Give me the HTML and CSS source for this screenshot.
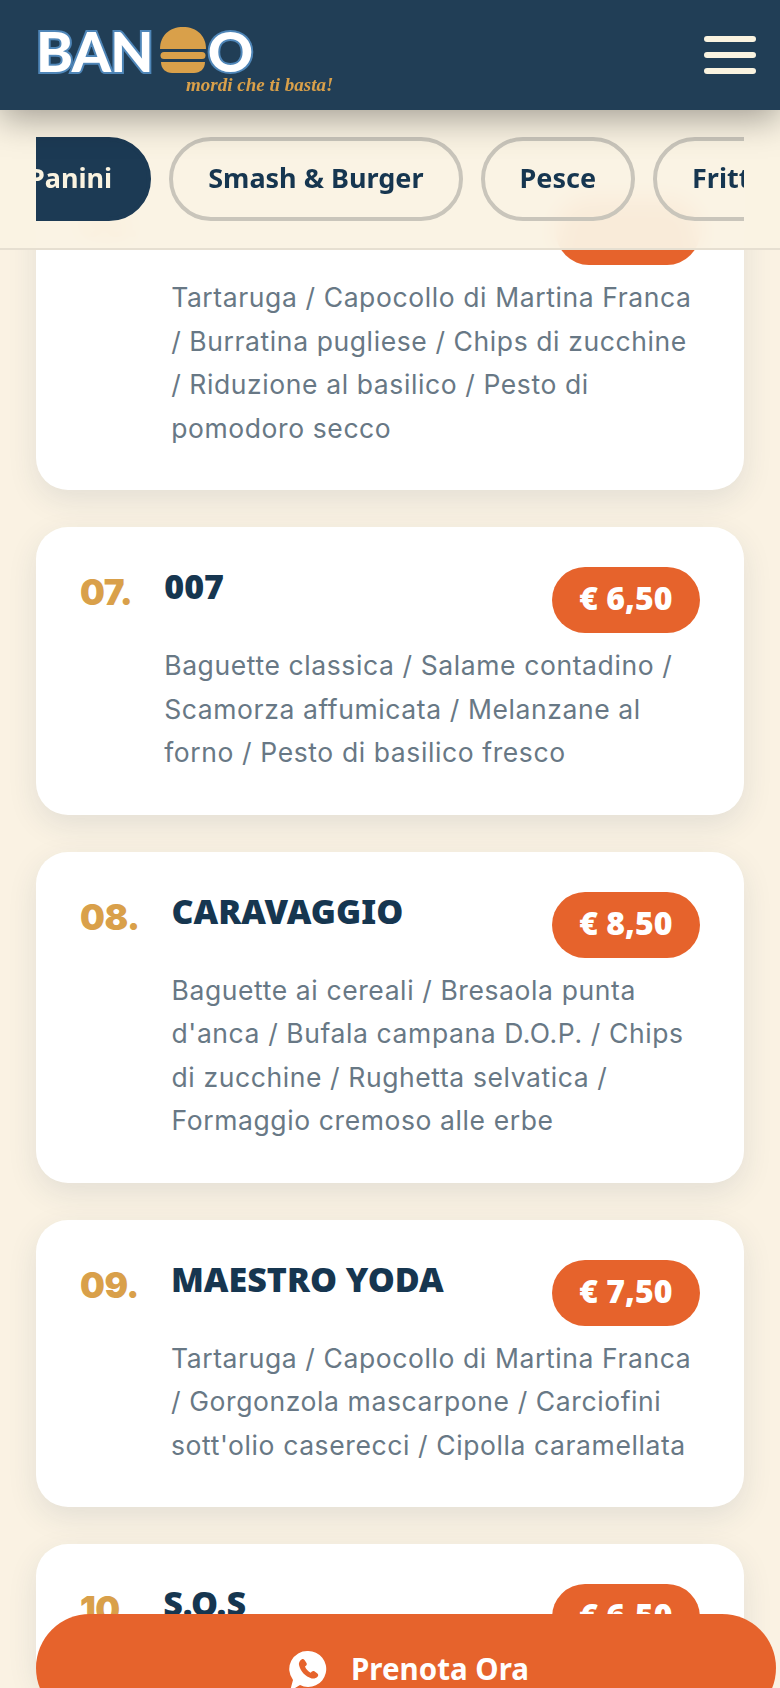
FILE: index.html
```html
<!DOCTYPE html>
<html lang="it">
<head>
    <meta charset="UTF-8">
    <meta name="viewport" content="width=device-width, initial-scale=1.0">
    <title>Banoo - Menu</title>
    <link rel="stylesheet" href="styles.css">
</head>
<body>
    <header class="topbar">
        <a class="logo" href="#">
            <span class="logo-word">BAN<svg class="logo-burger" viewBox="0 0 48 46" aria-hidden="true">
                <path d="M1 22C1 8 11 0 24 0s23 8 23 22z" fill="#d9a04a"/>
                <rect x="1.500" y="25" width="45" height="7" rx="3.500" fill="#d9a04a"/>
                <path d="M2 35h44c0 7-5 11-11 11H13C7 46 2 42 2 35z" fill="#d9a04a"/>
            </svg>O</span>
            <span class="logo-tag">mordi che ti basta!</span>
        </a>
        <button class="burger" aria-label="Menu">
            <span></span>
            <span></span>
            <span></span>
        </button>
    </header>

    <nav class="cats">
        <div class="cats-track">
            <a class="cat cat-active" href="#">Panini</a>
            <a class="cat" href="#">Smash &amp; Burger</a>
            <a class="cat" href="#">Pesce</a>
            <a class="cat" href="#">Fritti</a>
        </div>
    </nav>

    <main class="menu">
        <article class="item">
            <span class="item-num">06.</span>
            <div class="item-body">
                <div class="item-head">
                    <h3 class="item-name"></h3>
                    <span class="item-price item-price-empty"></span>
                </div>
                <p class="item-desc">Tartaruga / Capocollo di Martina Franca / Burratina pugliese / Chips di zucchine / Riduzione al basilico / Pesto di pomodoro secco</p>
            </div>
        </article>

        <article class="item">
            <span class="item-num">07.</span>
            <div class="item-body">
                <div class="item-head">
                    <h3 class="item-name">007</h3>
                    <span class="item-price">€ 6,50</span>
                </div>
                <p class="item-desc">Baguette classica / Salame contadino / Scamorza affumicata / Melanzane al forno / Pesto di basilico fresco</p>
            </div>
        </article>

        <article class="item">
            <span class="item-num">08.</span>
            <div class="item-body">
                <div class="item-head">
                    <h3 class="item-name">CARAVAGGIO</h3>
                    <span class="item-price">€ 8,50</span>
                </div>
                <p class="item-desc">Baguette ai cereali / Bresaola punta d'anca / Bufala campana D.O.P. / Chips di zucchine / Rughetta selvatica / Formaggio cremoso alle erbe</p>
            </div>
        </article>

        <article class="item">
            <span class="item-num">09.</span>
            <div class="item-body">
                <div class="item-head">
                    <h3 class="item-name">MAESTRO YODA</h3>
                    <span class="item-price">€ 7,50</span>
                </div>
                <p class="item-desc">Tartaruga / Capocollo di Martina Franca / Gorgonzola mascarpone / Carciofini sott'olio caserecci / Cipolla caramellata</p>
            </div>
        </article>

        <article class="item">
            <span class="item-num">10.</span>
            <div class="item-body">
                <div class="item-head">
                    <h3 class="item-name">S.O.S</h3>
                    <span class="item-price">€ 6,50</span>
                </div>
            </div>
        </article>
    </main>

    <a class="cta" href="#">
        <svg class="cta-icon" viewBox="0 0 38 42" aria-hidden="true">
            <path d="M19 1a18 18 0 1 1-8 34L1 41l3-11A18 18 0 0 1 19 1z" fill="#fff"/>
            <path d="M12.500 9.500c1-.8 2.300-.6 3 .4l2 3.100c.5.800.4 1.800-.3 2.500l-1.200 1.100c1 2.700 3 4.900 5.600 6.100l1.300-1.200c.7-.6 1.700-.7 2.500-.2l3 2.100c1 .7 1.100 2.100.3 3-1.500 1.700-3.800 2.600-6 2-6.300-1.700-11.300-6.900-12.700-13.300-.5-2.200.7-4.300 2.500-5.600z" fill="#e6632c"/>
        </svg>
        Prenota Ora
    </a>
</body>
</html>
```

FILE: styles.css
```css
* {
    box-sizing: border-box;
}

html, body {
    height: 1688px;
    overflow: hidden;
}

body {
    margin: 0;
    font-family: Inter, sans-serif;
    background-color: #faf2e3;
    color: #163650;
}

a {
    text-decoration: none;
}

/* barra in alto */
.topbar {
    position: relative;
    z-index: 3;
    height: 110px;
    padding: 0 24px 0 36px;
    display: flex;
    align-items: center;
    justify-content: space-between;
    background-color: rgba(30, 60, 84, 0.99);
    box-shadow: 0 8px 34px rgba(0, 0, 0, 0.36);
}

.logo {
    display: flex;
    flex-direction: column;
    margin-top: 11px;
}

.logo-word {
    display: flex;
    align-items: center;
    height: 48px;
    font-family: Lato, sans-serif;
    font-size: 56px;
    font-weight: 900;
    letter-spacing: -0.8px;
    color: #fff;
    -webkit-text-stroke: 4px #4f86b8;
    paint-order: stroke fill;
}

.logo-burger {
    width: 48px;
    height: 46px;
    margin: 0 1px 0 6px;
}

.logo-tag {
    align-self: flex-end;
    margin: 1px -81px 0 0;
    font-family: "Liberation Serif", serif;
    font-size: 19px;
    font-style: italic;
    font-weight: bold;
    line-height: 20px;
    color: #d9a04a;
}

.burger {
    display: flex;
    flex-direction: column;
    gap: 10px;
    width: 52px;
    padding: 0;
    border: none;
    background: none;
}

.burger span {
    height: 6px;
    border-radius: 3px;
    background-color: #faf3e0;
}

/* categorie */
.cats {
    position: relative;
    z-index: 2;
    height: 140px;
    padding: 27px 36px 0;
    background-color: rgba(250, 242, 227, 0.95);
    backdrop-filter: blur(12px);
    border-bottom: 2px solid #e6dfd1;
}

.cats-track {
    display: flex;
    gap: 18px;
    overflow: hidden;
}

.cat {
    flex: none;
    height: 84px;
    display: flex;
    align-items: center;
    padding: 0 35px 4px;
    border: 4px solid #c9c5bb;
    border-radius: 42px;
    font-family: "Noto Sans", sans-serif;
    font-size: 27px;
    font-weight: 700;
    color: #163650;
}

.cat-active {
    margin-left: -47px;
    background-color: #1c3a54;
    border-color: #1c3a54;
    color: #faf3e0;
}

/* lista piatti */
.menu {
    margin-top: -91px;
    padding: 0 36px;
    display: flex;
    flex-direction: column;
    gap: 37px;
}

.item {
    display: flex;
    gap: 32px;
    padding: 40px 44px;
    background: #fff;
    border-radius: 32px;
    box-shadow: 0 10px 30px rgba(31, 62, 87, 0.1);
}

.item-num {
    margin-top: 1px;
    font-family: Inter, sans-serif;
    font-size: 35px;
    font-weight: 900;
    letter-spacing: -0.5px;
    line-height: 48px;
    color: #d9a04a;
}

.item-body {
    flex: 1;
}

.item-head {
    display: flex;
    justify-content: space-between;
    align-items: flex-start;
}

.item-name {
    margin: 0;
    font-family: "Noto Sans", sans-serif;
    font-size: 34px;
    font-weight: 900;
    line-height: 38px;
    color: #163650;
}

.item-price {
    height: 66px;
    padding: 0 27.500px 5px;
    display: flex;
    align-items: center;
    border-radius: 33px;
    background-color: #e6632c;
    font-family: "Noto Sans", sans-serif;
    font-size: 32px;
    font-weight: 900;
    color: #fff;
}

.item-price-empty {
    width: 144px;
}

.item-desc {
    margin: 11px 0 0;
    font-size: 26.500px;
    letter-spacing: 0.6px;
    line-height: 43.500px;
    color: #687885;
}

/* bottone prenota */
.cta {
    position: fixed;
    z-index: 4;
    left: 36px;
    right: 4px;
    bottom: -34px;
    height: 108px;
    padding-left: 6px;
    display: flex;
    align-items: center;
    justify-content: center;
    gap: 24px;
    border-radius: 54px;
    background-color: #e6632c;
    font-family: "Noto Sans", sans-serif;
    font-size: 29.500px;
    font-weight: 700;
    color: #fff;
}

.cta-icon {
    width: 38px;
    height: 42px;
    margin-top: 6px;
}
```
